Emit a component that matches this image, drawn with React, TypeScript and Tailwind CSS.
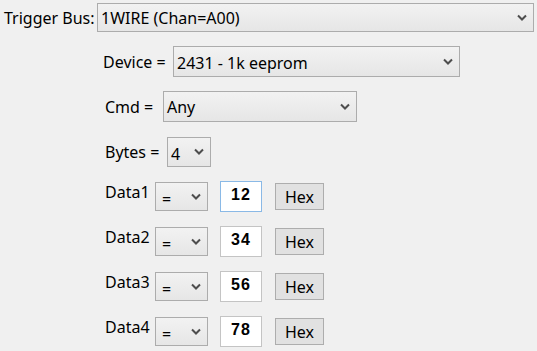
import React from "react";

const FONT = { fontFamily: '"Noto Sans", "Open Sans", sans-serif' };

function Chevron() {
  return (
    <svg width="10" height="7" viewBox="0 0 10 7" className="shrink-0">
      <path d="M1 1.5 L5 5.5 L9 1.5" fill="none" stroke="#4d4d4d" strokeWidth="2" />
    </svg>
  );
}

function Combo({ value, className, textClass = "" }: { value: string; className: string; textClass?: string }) {
  return (
    <div
      className={`flex items-center justify-between border border-[#acacac] bg-gradient-to-b from-[#f2f2f2] to-[#e6e6e6] pl-[3px] pr-[6px] ${className}`}
    >
      <span className={`text-[16px] leading-[20px] text-black whitespace-nowrap ${textClass}`}>{value}</span>
      <Chevron />
    </div>
  );
}

const DATA_ROWS = [
  { label: "Data1", value: "12", focused: true },
  { label: "Data2", value: "34", focused: false },
  { label: "Data3", value: "56", focused: false },
  { label: "Data4", value: "78", focused: false },
];

export default function App() {
  return (
    <div className="w-[537px] h-[351px] bg-[#f0f0f0] overflow-hidden text-black" style={FONT}>
      <div className="flex flex-col gap-[14px] pt-[1px] pl-[4px] pr-[3px]">
        {/* Trigger bus */}
        <div className="flex h-[31px] items-end">
          <div className="w-[93px] h-[29px] flex items-center text-[16px] leading-[20px]">Trigger Bus:</div>
          <Combo value="1WIRE (Chan=A00)" className="flex-1 h-[29px]" />
        </div>

        {/* Device */}
        <div className="flex h-[31px] items-center pl-[99px]">
          <div className="w-[70px] text-[16px] leading-[20px]">Device =</div>
          <Combo value="2431 - 1k eeprom" className="w-[287px] h-[31px]" textClass="pt-[3px]" />
        </div>

        {/* Cmd */}
        <div className="flex h-[31px] items-center pl-[101px]">
          <div className="w-[58px] text-[16px] leading-[20px]">Cmd =</div>
          <Combo value="Any" className="w-[194px] h-[31px]" textClass="pt-[1px]" />
        </div>

        {/* Bytes */}
        <div className="flex h-[31px] items-center pl-[101px]">
          <div className="w-[62px] text-[16px] leading-[20px]">Bytes =</div>
          <Combo value="4" className="w-[44px] h-[30px]" textClass="pt-[4px]" />
        </div>

        {/* Data rows */}
        {DATA_ROWS.map((row) => (
          <div key={row.label} className="flex h-[31px] items-center pl-[101px]">
            <div className="w-[50px] self-start mt-[1px] text-[16px] leading-[20px]">{row.label}</div>
            <Combo value="=" className="w-[53px] h-[29px]" textClass="pt-[5px] pl-[3px]" />
            <div
              className={`ml-[12px] w-[42px] h-[31px] bg-white border flex items-start justify-center pt-[4px] ${
                row.focused ? "border-[#8ab9e6]" : "border-[#c4c4c4]"
              }`}
            >
              <span
                className="text-[16px] leading-[18px] font-bold tracking-[1px]"
                style={{ fontFamily: '"Liberation Sans", Arial, sans-serif' }}
              >
                {row.value}
              </span>
            </div>
            <button className="ml-[13px] w-[49px] h-[27px] bg-[#e1e1e1] border border-[#adadad] text-[16px] leading-[20px] flex items-center justify-center pt-[1px]">
              Hex
            </button>
          </div>
        ))}
      </div>
    </div>
  );
}
